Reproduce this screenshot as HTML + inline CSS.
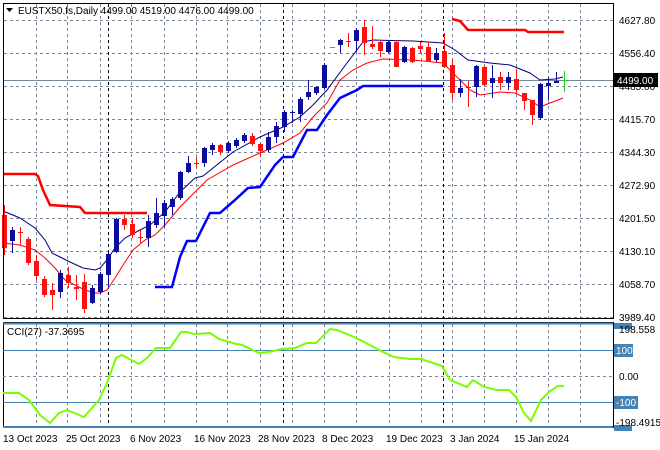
<!DOCTYPE html>
<html><head><meta charset="utf-8"><style>
html,body{margin:0;padding:0;background:#fff;}
svg{display:block}
text{font-family:"Liberation Sans",sans-serif;font-size:10px;}
</style></head><body>
<svg id="s" width="660" height="450" viewBox="0 0 660 450" xmlns="http://www.w3.org/2000/svg">
<rect width="660" height="450" fill="#fff"/>
<g id="grid" stroke="#7a8595" stroke-width="1" stroke-dasharray="3,3"></g>
<g id="sep" stroke="#000" stroke-width="1" stroke-dasharray="3,3"></g>
<line x1="3" y1="80.5" x2="613" y2="80.5" stroke="#778899"/>
<polyline fill="none" stroke="#ff0000" stroke-width="2.5" points="3,174 35,174 38,176 43,190 50,205 80,207 85,213 147,213"/>
<polyline fill="none" stroke="#ff0000" stroke-width="2.5" points="452,19 460,21 468,30 525,30 528,32 564,32"/>
<polyline fill="none" stroke="#0000ff" stroke-width="2.5" points="155,287 172,287 180,257 187,241 196,241 210,213 220,213 235,200 248,188 260,187 275,165 283,157 293,157 307,130 317,130 327,115 340,98 357,90 363,86 443,86"/>
<polyline fill="none" stroke="#000080" stroke-width="1" points="3,211 20,218 35,228 45,240 52,253 60,257 70,262 83,268 95,270 100,268 107,260 115,248 125,238 140,230 150,225 165,212 180,192 195,178 203,176 233,152 260,137 283,127 300,117 313,105 327,90 347,63 363,42 373,40 413,41 443,43 455,50 468,60 490,63 510,65 530,73 540,80 555,79 563,77"/>
<polyline fill="none" stroke="#ff0000" stroke-width="1" points="3,243 20,245 35,250 45,258 55,268 65,280 75,285 85,290 95,293 100,293 107,290 115,278 125,262 133,250 145,240 155,235 165,225 180,207 195,192 207,180 233,165 260,153 283,143 300,133 313,117 327,103 340,80 353,70 367,63 383,59 413,60 443,63 460,80 470,90 480,95 500,92 515,93 530,100 540,107 550,103 563,98"/>
<g id="candles"></g>
<!-- frames -->
<rect x="3.5" y="3.5" width="610" height="315" fill="none" stroke="#000"/>
<rect x="3.5" y="322.5" width="610" height="105" fill="none" stroke="#000"/>
<line x1="3" y1="323.5" x2="613" y2="323.5" stroke="#4682b4" stroke-width="2"/>
<line x1="3" y1="427" x2="613" y2="427" stroke="#4682b4" stroke-width="2"/>
<line x1="3" y1="350.5" x2="613" y2="350.5" stroke="#4682b4"/>
<line x1="3" y1="402.5" x2="613" y2="402.5" stroke="#4682b4"/>
<line x1="3" y1="376.5" x2="613" y2="376.5" stroke="#7a8595" stroke-dasharray="3,3"/>
<polyline fill="none" stroke="#7cfc00" stroke-width="2" points="3,393 19,393 29,400 40,415 50,423 59,413 67,410 84,417 99,400 107,383 116,358 122,355 139,364 147,358 156,348 170,348 181,332 187,332 194,334 210,333 219,339 236,344 242,345 259,353 269,352 282,349 295,348 307,343 316,343 330,329 337,330 354,337 366,343 381,351 394,357 410,359 421,359 442,366 450,380 467,387 473,380 484,387 497,390 509,390 516,397 524,413 531,421 541,400 549,392 558,386 564,386"/>
<!-- header -->
<path d="M6,8 L13,8 L9.5,12 Z" fill="#000"/>
<text x="18" y="14" font-size="11">EUSTX50.fs,Daily  4499.00 4519.00 4476.00 4499.00</text>
<text x="7" y="335">CCI(27) -37.3695</text>
<!-- price axis -->
<g fill="#000">
<text x="619" y="24">4627.80</text>
<text x="619" y="57">4556.40</text>
<text x="619" y="90">4485.00</text>
<text x="619" y="123">4415.70</text>
<text x="619" y="156">4344.30</text>
<text x="619" y="189">4272.90</text>
<text x="619" y="222">4201.50</text>
<text x="619" y="255">4130.10</text>
<text x="619" y="288">4058.70</text>
<text x="619" y="321">3989.40</text>
</g>
<rect x="613" y="73" width="45" height="14" fill="#000"/>
<text x="617" y="84" fill="#fff" font-size="10.5">4499.00</text>
<rect x="614" y="323" width="18" height="6" fill="#4682b4"/>
<text x="619" y="333">198.558</text>
<rect x="614" y="344" width="19" height="13" fill="#4682b4"/>
<text x="616" y="354" fill="#fff">100</text>
<text x="619" y="380">0.00</text>
<rect x="614" y="396" width="24" height="13" fill="#4682b4"/>
<text x="616" y="406" fill="#fff">-100</text>
<rect x="614" y="425" width="18" height="6" fill="#4682b4"/>
<text x="616" y="426">-198.4915</text>
<!-- date axis -->
<g fill="#000">
<text x="3" y="442">13 Oct 2023</text>
<text x="66" y="442">25 Oct 2023</text>
<text x="130" y="442">6 Nov 2023</text>
<text x="194" y="442">16 Nov 2023</text>
<text x="258" y="442">28 Nov 2023</text>
<text x="322" y="442">8 Dec 2023</text>
<text x="386" y="442">19 Dec 2023</text>
<text x="450" y="442">3 Jan 2024</text>
<text x="514" y="442">15 Jan 2024</text>
</g>
</svg>
<script>
var NS="http://www.w3.org/2000/svg";
function el(p,t,a){var e=document.createElementNS(NS,t);for(var k in a)e.setAttribute(k,a[k]);p.appendChild(e);return e;}
var g=document.getElementById('grid');
var vx=[36,67,100,131,164,196,227,260,292,324,356,389,421,452,484,516,548,580];
vx.forEach(function(x){el(g,'line',{x1:x+.5,y1:4,x2:x+.5,y2:318});el(g,'line',{x1:x+.5,y1:324,x2:x+.5,y2:427});});
[20,53,86,119,152,185,218,251,284,317].forEach(function(y){el(g,'line',{x1:4,y1:y+.5,x2:613,y2:y+.5});});
var sp=document.getElementById('sep');
[108,283,443].forEach(function(x){el(sp,'line',{x1:x+.5,y1:4,x2:x+.5,y2:318});el(sp,'line',{x1:x+.5,y1:324,x2:x+.5,y2:427});});
var B="#0b0b9e",R="#ff1010",G="#22cc22";
// [bodyTop, bodyBot, wickTop, wickBot, color]
var c=[
[215,248,205,255,R],[230,241,227,253,B],[232,233,227,245,R],[239,263,237,265,R],[261,276,255,280,R],
[279,295,276,297,R],[290,295,283,310,R],[273,292,270,298,B],[275,283,267,288,R],[287,289,275,300,R],
[282,309,274,313,R],[288,303,285,304,B],[274,292,272,294,B],[254,275,252,287,B],[219,252,218,253,B],
[219,225,215,230,R],[224,235,218,238,R],[237,238,230,243,R],[221,238,215,247,B],[213,225,198,228,B],
[203,216,200,227,B],[199,207,197,215,B],[172,198,171,200,B],[163,172,156,173,B],[163,164,157,168,R],
[148,163,147,167,B],[145,150,143,155,B],[145,152,144,155,R],[143,151,141,153,B],[140,146,138,148,B],
[135,141,133,143,B],[136,144,133,146,R],[144,151,143,157,R],[137,150,132,152,B],[126,137,122,143,B],
[112,127,110,132,B],[112,113,110,123,B],[99,114,97,122,B],[92,97,80,100,B],[87,93,86,95,B],
[65,88,63,89,B],[47,48,47,48,G],[40,45,39,53,B],[41,42,33,47,R],[30,41,28,52,B],
[27,43,20,55,R],[44,47,26,49,R],[42,51,41,57,R],[42,52,41,53,B],[42,67,40,67,R],
[47,62,46,63,B],[48,62,47,63,R],[46,49,42,53,R],[47,61,42,62,R],[53,60,48,62,B],
[51,67,33,68,R],[65,93,59,100,R],[88,93,79,97,B],[87,88,81,107,R],[66,87,65,97,B],
[67,85,65,86,R],[78,83,65,98,B],[77,83,72,90,R],[77,83,72,90,B],[79,90,69,93,R],
[93,101,93,110,R],[100,115,100,125,R],[84,118,83,120,B],[83,86,77,100,B],[81,83,72,83,B],
[80,81,71,92,G]];
var cg=document.getElementById('candles');
c.forEach(function(d,i){var x=4+8*i;
el(cg,'line',{x1:x+.5,y1:d[2],x2:x+.5,y2:d[3],stroke:d[4],'stroke-width':1});
var h=Math.max(1,d[1]-d[0]);
if(h<=1){el(cg,'line',{x1:x-2,y1:d[0]+.5,x2:x+3,y2:d[0]+.5,stroke:d[4]});}
else el(cg,'rect',{x:x-2,y:d[0],width:5,height:h,fill:d[4]});
});
</script>
</body></html>
